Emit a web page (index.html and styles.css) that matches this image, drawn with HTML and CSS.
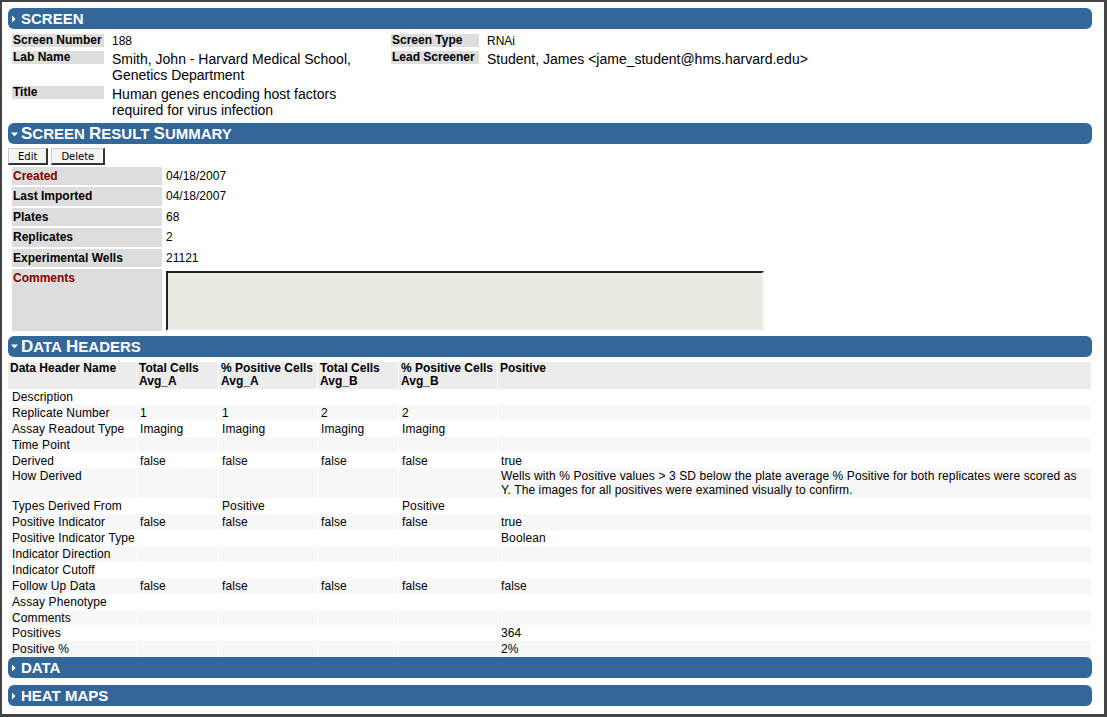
FILE: index.html
```html
<!DOCTYPE html>
<html>
  <head>
    <link rel="stylesheet" href="styles.css">
  </head>
  <body>
    <div class="frame">

      <div class="section">
        <h2 class="bar"><svg class="toggle" viewBox="0 0 8 8"><polygon points="1,0.5 4.5,4 1,7.5"/></svg>SCREEN</h2>
        <div class="screen-fields">
          <div class="field-label">Screen Number</div>
          <div class="field-value small">188</div>
          <div class="field-label">Screen Type</div>
          <div class="field-value small">RNAi</div>

          <div class="field-label">Lab Name</div>
          <div class="field-value">Smith, John - Harvard Medical School, Genetics Department</div>
          <div class="field-label">Lead Screener</div>
          <div class="field-value">Student, James &lt;jame_student@hms.harvard.edu&gt;</div>

          <div class="field-label">Title</div>
          <div class="field-value">Human genes encoding host factors required for virus infection</div>
        </div>
      </div>

      <div class="section">
        <h2 class="bar"><svg class="toggle" viewBox="0 0 8 8"><polygon points="0,2.5 7,2.5 3.5,6.5"/></svg><span class="cap">S</span>CREEN&nbsp;<span class="cap">R</span>ESULT&nbsp;<span class="cap">S</span>UMMARY</h2>
        <div class="actions">
          <button>Edit</button>
          <button>Delete</button>
        </div>
        <table class="summary">
          <tr><th class="required">Created</th><td>04/18/2007</td></tr>
          <tr><th>Last Imported</th><td>04/18/2007</td></tr>
          <tr><th>Plates</th><td>68</td></tr>
          <tr><th>Replicates</th><td>2</td></tr>
          <tr><th>Experimental Wells</th><td>21121</td></tr>
          <tr class="comments"><th class="required">Comments</th><td><textarea></textarea></td></tr>
        </table>
      </div>

      <div class="section">
        <h2 class="bar"><svg class="toggle" viewBox="0 0 8 8"><polygon points="0,2.5 7,2.5 3.5,6.5"/></svg><span class="cap">D</span>ATA&nbsp;<span class="cap">H</span>EADERS</h2>
        <table class="headers">
          <thead>
            <tr>
              <th class="c1">Data Header Name</th>
              <th class="c2">Total Cells Avg_A</th>
              <th class="c3">% Positive Cells Avg_A</th>
              <th class="c4">Total Cells Avg_B</th>
              <th class="c5">% Positive Cells Avg_B</th>
              <th>Positive</th>
            </tr>
          </thead>
          <tbody>
            <tr><td>Description</td><td></td><td></td><td></td><td></td><td></td></tr>
            <tr><td>Replicate Number</td><td>1</td><td>1</td><td>2</td><td>2</td><td></td></tr>
            <tr><td>Assay Readout Type</td><td>Imaging</td><td>Imaging</td><td>Imaging</td><td>Imaging</td><td></td></tr>
            <tr><td>Time Point</td><td></td><td></td><td></td><td></td><td></td></tr>
            <tr><td>Derived</td><td>false</td><td>false</td><td>false</td><td>false</td><td>true</td></tr>
            <tr><td>How Derived</td><td></td><td></td><td></td><td></td><td>Wells with % Positive values &gt; 3 SD below the plate average % Positive for both replicates were scored as Y. The images for all positives were examined visually to confirm.</td></tr>
            <tr><td>Types Derived From</td><td></td><td>Positive</td><td></td><td>Positive</td><td></td></tr>
            <tr><td>Positive Indicator</td><td>false</td><td>false</td><td>false</td><td>false</td><td>true</td></tr>
            <tr><td>Positive Indicator Type</td><td></td><td></td><td></td><td></td><td>Boolean</td></tr>
            <tr><td>Indicator Direction</td><td></td><td></td><td></td><td></td><td></td></tr>
            <tr><td>Indicator Cutoff</td><td></td><td></td><td></td><td></td><td></td></tr>
            <tr><td>Follow Up Data</td><td>false</td><td>false</td><td>false</td><td>false</td><td>false</td></tr>
            <tr><td>Assay Phenotype</td><td></td><td></td><td></td><td></td><td></td></tr>
            <tr><td>Comments</td><td></td><td></td><td></td><td></td><td></td></tr>
            <tr><td>Positives</td><td></td><td></td><td></td><td></td><td>364</td></tr>
            <tr><td>Positive %</td><td></td><td></td><td></td><td></td><td>2%</td></tr>
          </tbody>
        </table>
      </div>

      <div class="section">
        <h2 class="bar"><svg class="toggle" viewBox="0 0 8 8"><polygon points="1,0.5 4.5,4 1,7.5"/></svg>DATA</h2>
      </div>

      <div class="section heat-maps">
        <h2 class="bar"><svg class="toggle" viewBox="0 0 8 8"><polygon points="1,0.5 4.5,4 1,7.5"/></svg>HEAT MAPS</h2>
      </div>

    </div>
  </body>
</html>
```

FILE: styles.css
```css
html, body {
  margin: 0;
}
body {
  font-family: "Liberation Sans", Arial, sans-serif;
  font-size: 12px;
  color: #000;
  background-color: #fff;
}
.frame {
  box-sizing: border-box;
  height: 717px;
  border: solid #444;
  border-width: 2px 3px 3px 2px;
  padding: 6px 12px 0 6px;
}

/* collapsible section title bars, small caps done by hand */
.bar {
  display: flex;
  align-items: center;
  height: 21px;
  margin: 0;
  padding-left: 3px;
  background-color: #336699;
  color: #fff;
  border-radius: 6px;
  font-size: 15px;
  font-weight: bold;
  line-height: 21px;
  white-space: nowrap;
}
.bar .cap {
  font-size: 17px;
}
.toggle {
  width: 8px;
  height: 8px;
  margin-right: 2px;
  fill: #fff;
}

/* screen overview fields */
.screen-fields {
  display: grid;
  grid-template-columns: 92px 271px 88px 1fr;
  column-gap: 8px;
  row-gap: 3px;
  align-items: start;
  margin: 5px 0 5px 4px;
}
.field-label {
  background-color: #ddd;
  font-weight: bold;
  line-height: 13px;
  padding-left: 1px;
}
.field-value {
  font-size: 14px;
  line-height: 16px;
}
.field-value.small {
  font-size: 12px;
  line-height: 14px;
}

/* result summary */
.actions {
  display: flex;
  gap: 3px;
  margin-top: 4px;
}
.actions button {
  height: 17px;
  padding: 0 9px;
  font-family: "DejaVu Sans", Verdana, sans-serif;
  font-size: 10px;
  color: #000;
  background-color: #f4f4f4;
  border: 1px solid #ccc;
  border-right: 2px solid #333;
  border-bottom: 2px solid #333;
}
.summary {
  border-spacing: 2px;
  margin: 0 0 3px 2px;
}
.summary th {
  width: 147px;
  padding: 2px 2px 2.4px 1px;
  background-color: #ddd;
  text-align: left;
  vertical-align: top;
  line-height: 14px;
}
.summary td {
  padding: 2px 2px 2.4px;
  vertical-align: top;
  line-height: 14px;
}
.summary th.required {
  color: #800000;
}
.summary .comments td {
  padding-bottom: 0;
}
.summary textarea {
  display: block;
  box-sizing: border-box;
  width: 598px;
  height: 60px;
  margin: 0;
  resize: none;
  background-color: #ece9e3;
  border: 2px solid;
  border-color: #222 #f4f4f4 #f4f4f4 #222;
}

/* data headers grid */
.headers {
  table-layout: fixed;
  width: calc(100% + 1px);
  margin: 5px 0 0 -1px;
  border-spacing: 1px 0;
}
.headers th {
  box-sizing: border-box;
  height: 27px;
  padding: 0 1px 1px 2px;
  background-color: #ececec;
  text-align: left;
  vertical-align: top;
  line-height: 13px;
}
.headers .c1 { width: 128px; }
.headers .c2 { width: 81px; }
.headers .c3 { width: 98px; }
.headers .c4 { width: 80px; }
.headers .c5 { width: 98px; }
.headers td {
  padding: 1px 0 0.9px 3px;
  vertical-align: top;
  line-height: 14px;
  letter-spacing: 0.1px;
}
.headers td:last-child {
  padding-right: 8px;
}
.headers tbody tr:nth-child(even) td {
  background-color: #f7f7f7;
}
.headers td:first-child {
  padding-left: 4px;
}

.heat-maps {
  margin-top: 7px;
}
```
